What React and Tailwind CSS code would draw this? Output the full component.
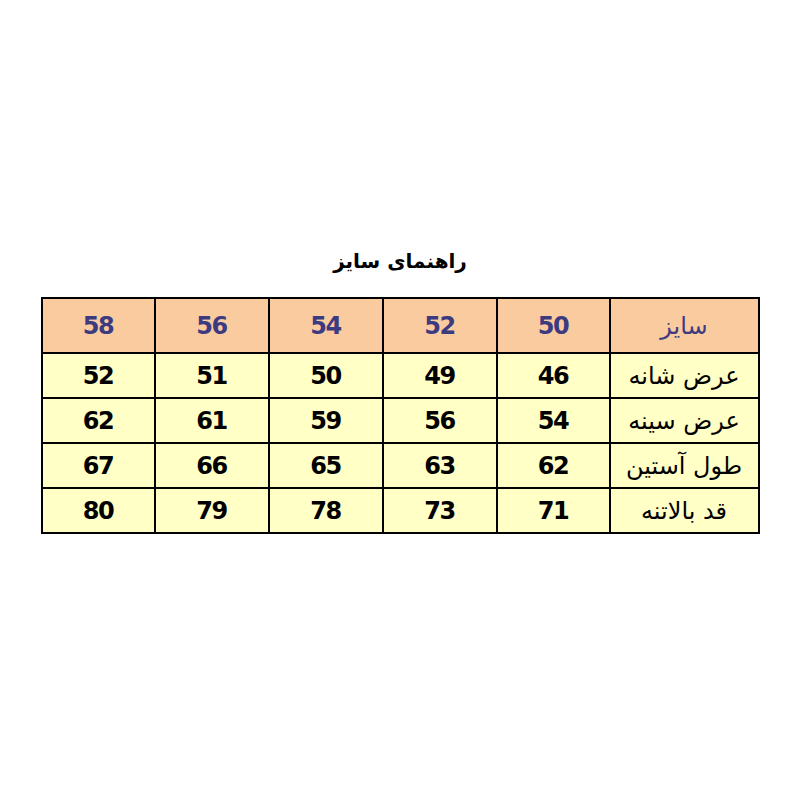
import React from "react";

const header = ["58", "56", "54", "52", "50"];
const rows = [
  { label: "عرض شانه", vals: ["52", "51", "50", "49", "46"] },
  { label: "عرض سینه", vals: ["62", "61", "59", "56", "54"] },
  { label: "طول آستین", vals: ["67", "66", "65", "63", "62"] },
  { label: "قد بالاتنه", vals: ["80", "79", "78", "73", "71"] },
];

const widths = ["w-[113px]", "w-[114px]", "w-[114px]", "w-[114px]", "w-[113px]", "w-[149px]"];

export default function App() {
  return (
    <div
      className="w-[800px] h-[800px] bg-white flex flex-col items-center pt-[245px]"
      style={{ fontFamily: '"DejaVu Sans", "Noto Sans", sans-serif' }}
    >
      <div dir="rtl" className="text-[20px] font-bold leading-[32px] text-black">
        راهنمای سایز
      </div>
      <table className="mt-[20px] border-collapse border-2 border-black w-[717px] table-fixed">
        <colgroup>
          {widths.map((w, i) => (
            <col key={i} className={w} />
          ))}
        </colgroup>
        <tbody>
          <tr className="h-[55px] bg-[#fbcba0]">
            {header.map((h) => (
              <td key={h} className="border-2 border-black text-center text-[24px] tracking-[-1.5px] font-bold text-[#3d3b80]">
                {h}
              </td>
            ))}
            <td dir="rtl" className="border-2 border-black text-center text-[24px] text-[#3d3b80]">
              سایز
            </td>
          </tr>
          {rows.map((r) => (
            <tr key={r.label} className="h-[45px] bg-[#ffffc6]">
              {r.vals.map((v, i) => (
                <td key={i} className="border-2 border-black text-center text-[24px] tracking-[-1.5px] font-bold text-black">
                  {v}
                </td>
              ))}
              <td dir="rtl" className="border-2 border-black text-center text-[24px] text-black">
                {r.label}
              </td>
            </tr>
          ))}
        </tbody>
      </table>
    </div>
  );
}
